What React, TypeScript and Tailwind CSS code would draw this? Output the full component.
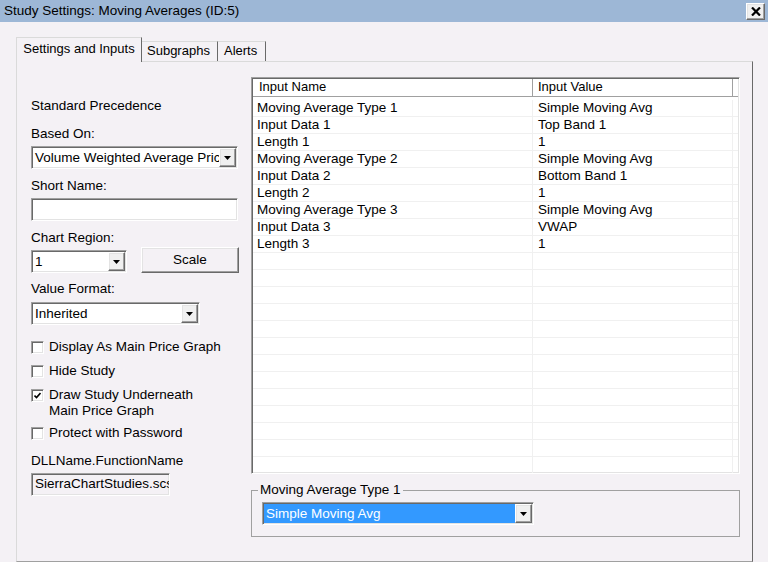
import React from 'react';

// classic win32 3D edges
const sunken =
  'border border-t-[#a0a0a0] border-l-[#a0a0a0] border-b-white border-r-white shadow-[inset_1px_1px_0_#696969,inset_-1px_-1px_0_#e3e3e3]';
const raised =
  'border border-t-white border-l-white border-b-[#696969] border-r-[#696969] shadow-[inset_-1px_-1px_0_#a0a0a0,inset_1px_1px_0_#e3e3e3]';

function DropArrow() {
  return (
    <div className={`flex h-full w-[17px] shrink-0 items-center justify-center bg-[#f0f0f0] ${raised}`}>
      <svg width="7" height="4" viewBox="0 0 7 4">
        <polygon points="0,0 7,0 3.5,4" fill="#000" />
      </svg>
    </div>
  );
}

function Combo({ value, width, highlight }: { value: string; width: string; highlight?: boolean }) {
  return (
    <div className={`flex h-[23px] bg-white p-px ${sunken} ${width}`}>
      <div
        className={`flex-1 overflow-hidden whitespace-nowrap pl-[2px] leading-[19px] ${
          highlight ? 'bg-[#3399ff] text-white' : 'text-black'
        }`}
      >
        {value}
      </div>
      <DropArrow />
    </div>
  );
}

function Check({ label, checked, mt }: { label: React.ReactNode; checked?: boolean; mt: string }) {
  return (
    <div className={`flex items-start ${mt}`}>
      <div className={`mt-[2px] flex h-[13px] w-[13px] shrink-0 items-center justify-center bg-white ${sunken}`}>
        {checked && (
          <svg width="7" height="7" viewBox="0 0 7 7">
            <path d="M0.5 3.5 L2.5 5.5 L6.5 1" stroke="#000" strokeWidth="1.6" fill="none" />
          </svg>
        )}
      </div>
      <div className="ml-[5px] leading-[16px]">{label}</div>
    </div>
  );
}

const inputs = [
  ['Moving Average Type 1', 'Simple Moving Avg'],
  ['Input Data 1', 'Top Band 1'],
  ['Length 1', '1'],
  ['Moving Average Type 2', 'Simple Moving Avg'],
  ['Input Data 2', 'Bottom Band 1'],
  ['Length 2', '1'],
  ['Moving Average Type 3', 'Simple Moving Avg'],
  ['Input Data 3', 'VWAP'],
  ['Length 3', '1'],
];

export default function App() {
  const rows = [...inputs, ...Array.from({ length: 13 }, () => ['', ''])];

  return (
    <div className="h-[562px] w-[768px] overflow-hidden bg-[#f4f1f5] font-['Liberation_Sans',Arial,sans-serif] text-[13.5px] text-black">
      {/* title bar */}
      <div className="flex h-[22px] items-center justify-between bg-[#9db7d6] pl-[4px] pr-[3px]">
        <span className="leading-[16px]">Study Settings: Moving Averages (ID:5)</span>
        <div className={`flex h-[17px] w-[19px] items-center justify-center bg-[#f0f0f0] ${raised}`}>
          <svg width="10" height="9" viewBox="0 0 10 9">
            <path d="M1 0.5 L9 8.5 M9 0.5 L1 8.5" stroke="#000" strokeWidth="2.2" />
          </svg>
        </div>
      </div>

      <div className="pt-[15px]">
        {/* tabs */}
        <div className="ml-[16px] flex h-[24px] items-end text-[13px]">
          <div className="relative z-10 -mb-px flex h-[25px] w-[126px] justify-center border-l border-t border-r border-l-[#dadada] border-t-[#dadada] border-r-[#696969] bg-[#f4f1f5] pt-[3px] leading-[16px]">
            Settings and Inputs
          </div>
          <div className="flex h-[20px] w-[76px] border-t border-r border-t-[#dadada] border-r-[#696969] pl-[5px] pt-[1px] leading-[16px]">
            Subgraphs
          </div>
          <div className="flex h-[20px] w-[48px] border-t border-r border-t-[#dadada] border-r-[#696969] pl-[6px] pt-[1px] leading-[16px]">
            Alerts
          </div>
        </div>

        {/* tab panel */}
        <div className="ml-[16px] flex h-[501px] w-[737px] border border-t-[#dadada] border-l-[#dadada] border-b-[#a0a0a0] border-r-[#696969]">
          {/* left column */}
          <div className="flex w-[234px] shrink-0 flex-col pl-[14px]">
            <div className="mt-[36px] leading-[16px]">Standard Precedence</div>
            <div className="mt-[12px] leading-[16px]">Based On:</div>
            <div className="mt-[4px]">
              <Combo value="Volume Weighted Average Price" width="w-[207px]" />
            </div>
            <div className="mt-[9px] leading-[16px]">Short Name:</div>
            <div className={`mt-[4px] h-[23px] w-[207px] bg-white ${sunken}`} />
            <div className="mt-[9px] leading-[16px]">Chart Region:</div>
            <div className="mt-[1px] flex items-start">
              <div className="mt-[3px]">
                <Combo value="1" width="w-[96px]" />
              </div>
              <button className={`ml-[14px] h-[26px] w-[98px] bg-[#f4f1f5] ${raised}`}>Scale</button>
            </div>
            <div className="mt-[8px] leading-[16px]">Value Format:</div>
            <div className="mt-[5px]">
              <Combo value="Inherited" width="w-[169px]" />
            </div>
            <Check mt="mt-[14px]" label="Display As Main Price Graph" />
            <Check mt="mt-[8px]" label="Hide Study" />
            <Check
              mt="mt-[8px]"
              checked
              label={
                <>
                  Draw Study Underneath
                  <br />
                  Main Price Graph
                </>
              }
            />
            <Check mt="mt-[6px]" label="Protect with Password" />
            <div className="mt-[12px] leading-[16px]">DLLName.FunctionName</div>
            <div className={`mt-[4px] h-[23px] w-[139px] overflow-hidden whitespace-nowrap bg-[#f4f1f5] pl-[3px] leading-[19px] ${sunken}`}>
              SierraChartStudies.scsf_MovingAverages
            </div>
          </div>

          {/* right column */}
          <div className="flex w-[489px] shrink-0 flex-col">
            <div className={`mt-[15px] flex h-[397px] flex-col overflow-hidden bg-white p-px ${sunken}`}>
              <div className="flex h-[18px] shrink-0 border-b border-[#a0a0a0] text-[13px] leading-[16px]">
                <div className="w-[280px] border-r border-[#a0a0a0] pl-[6px]">Input Name</div>
                <div className="w-[200px] border-r border-[#a0a0a0] pl-[5px]">Input Value</div>
                <div className="flex-1" />
              </div>
              <div className="h-[3px] shrink-0" />
              {rows.map((r, i) => (
                <div key={i} className="flex h-[17px] shrink-0 border-b border-[#f0f0f0] leading-[16px]">
                  <div className="w-[280px] border-r border-[#f0f0f0] pl-[4px]">{r[0]}</div>
                  <div className="w-[200px] border-r border-[#f0f0f0] pl-[5px]">{r[1]}</div>
                  <div className="flex-1" />
                </div>
              ))}
            </div>

            <fieldset className="mt-[8px] border border-[#a0a0a0] pb-[11px]">
              <legend className="ml-[6px] px-[2px] leading-[16px]">Moving Average Type 1</legend>
              <div className="mt-[4px] pl-[10px]">
                <Combo value="Simple Moving Avg" width="w-[272px]" highlight />
              </div>
            </fieldset>
          </div>
        </div>
      </div>
    </div>
  );
}
